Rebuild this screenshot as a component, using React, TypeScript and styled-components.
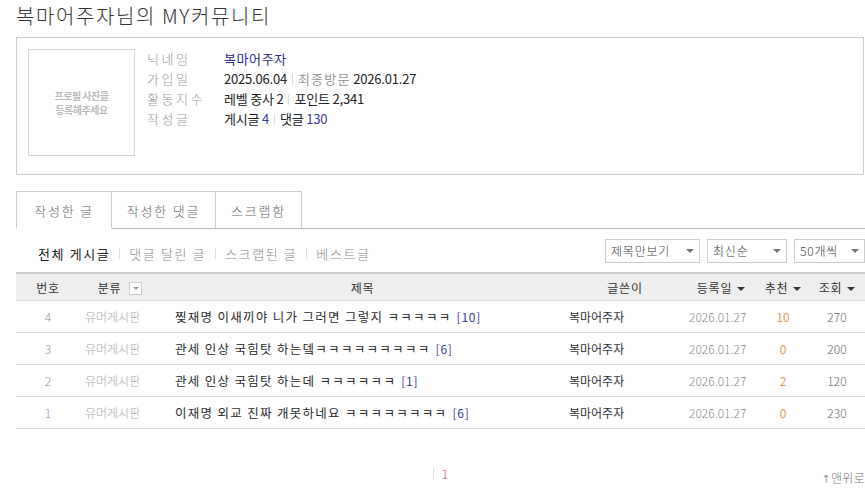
import styled, { createGlobalStyle } from 'styled-components'

const GlobalStyle = createGlobalStyle`
  html, body {
    margin: 0;
    padding: 0;
    background: #fff;
  }
  body {
    font-family: 'Noto Sans CJK KR', 'Noto Sans', sans-serif;
    font-size: 13px;
    color: #333;
  }
`

const Page = styled.div`
  width: 849px;
  padding: 0 0 0 16px;
  overflow: hidden;
`

const Title = styled.h1`
  margin: 0;
  padding-top: 1px;
  height: 36px;
  font-size: 20px;
  font-weight: 300;
  color: #333;
  letter-spacing: 1.6px;
`

const ProfileBox = styled.div`
  display: flex;
  gap: 12px;
  height: 114px;
  padding: 11px;
  border: 1px solid #ccc;
  width: 824px;
`

const PhotoBox = styled.div`
  width: 105px;
  height: 105px;
  border: 1px solid #d5d5d5;
  display: flex;
  align-items: center;
  justify-content: center;
  text-align: center;
  font-size: 10px;
  line-height: 14px;
  font-weight: bold;
  color: #bbb;
  letter-spacing: -0.5px;
`

const InfoList = styled.dl`
  margin: 0;
  display: grid;
  grid-template-columns: 77px auto;
  grid-auto-rows: 20px;
  align-content: start;
  font-size: 13px;
  line-height: 20px;
`

const Label = styled.dt`
  color: #999;
  letter-spacing: 2.5px;
  font-weight: 300;
`

const Value = styled.dd`
  margin: 0;
  color: #222;
  letter-spacing: -0.2px;
`

const Muted = styled.span`
  color: #999;
  letter-spacing: 1.2px;
`

const Nick = styled.span`
  color: #2c2c8c;
  letter-spacing: 0.6px;
`

const Num = styled.span`
  color: #3a3a9a;
`

const Bar = styled.span<{ $gap?: number }>`
  display: inline-block;
  width: 1px;
  height: 11px;
  background: #ddd;
  margin: 0 ${p => p.$gap ?? 5}px;
  vertical-align: -1px;
`

const Tabs = styled.div`
  display: flex;
  margin-top: 16px;
  border-bottom: 1px solid #bbb;
  height: 37px;
`

const Tab = styled.div<{ $active?: boolean; $w: number }>`
  width: ${p => p.$w}px;
  box-sizing: border-box;
  height: ${p => (p.$active ? '38px' : '37px')};
  border: 1px solid #ccc;
  border-left-width: ${p => (p.$active ? '1px' : '0')};
  border-bottom: ${p => (p.$active ? '1px solid #fff' : '0')};
  background: #fff;
  display: flex;
  align-items: center;
  justify-content: center;
  color: #666;
  font-size: 13px;
  font-weight: 300;
  letter-spacing: 1.8px;
`

const ToolRow = styled.div`
  display: flex;
  align-items: center;
  justify-content: space-between;
  height: 43px;
`

const SubNav = styled.div`
  display: flex;
  align-items: center;
  padding-left: 22px;
  padding-top: 5px;
  font-size: 13px;
  color: #888;
  letter-spacing: 1.6px;
`

const SubItem = styled.span<{ $on?: boolean }>`
  color: ${p => (p.$on ? '#222' : '#888')};
  font-weight: ${p => (p.$on ? 400 : 300)};
`

const Selects = styled.div`
  display: flex;
  gap: 7px;
`

const SelectBox = styled.div<{ $w: number }>`
  width: ${p => p.$w}px;
  height: 24px;
  box-sizing: border-box;
  border: 1px solid #ccc;
  display: flex;
  align-items: center;
  justify-content: space-between;
  padding: 0 5px;
  font-size: 12px;
  font-weight: 300;
  color: #444;
  letter-spacing: 0.8px;
`

const Caret = styled.span`
  width: 0;
  height: 0;
  border-left: 4px solid transparent;
  border-right: 4px solid transparent;
  border-top: 4px solid #777;
`

const Table = styled.table`
  width: 849px;
  border-collapse: collapse;
  table-layout: fixed;
`

const Th = styled.th`
  height: 26px;
  padding: 0;
  background: #eee;
  border-top: 2px solid #ccc;
  border-bottom: 1px solid #ddd;
  font-weight: normal;
  font-size: 12px;
  color: #333;
  text-align: center;
  letter-spacing: 0.8px;
`

const SortCaret = styled(Caret)`
  display: inline-block;
  margin-left: 5px;
  vertical-align: 2px;
  border-top-color: #333;
`

const FilterBtn = styled.span`
  display: inline-block;
  width: 11px;
  height: 11px;
  border: 1px solid #ccc;
  background: #fff;
  margin-left: 8px;
  vertical-align: -2px;
  position: relative;
  &::after {
    content: '';
    position: absolute;
    left: 3px;
    top: 4px;
    border-left: 3px solid transparent;
    border-right: 3px solid transparent;
    border-top: 3px solid #999;
  }
`

const Td = styled.td<{ $align?: string; $color?: string; $pad?: number; $bold?: boolean }>`
  height: 31px;
  padding: 0 0 0 ${p => p.$pad ?? 0}px;
  border-bottom: 1px solid #ddd;
  text-align: ${p => p.$align || 'left'};
  color: ${p => p.$color || '#333'};
  font-size: 12px;
  font-weight: ${p => (p.$bold ? 400 : 300)};
  white-space: nowrap;
  overflow: hidden;
`

const Subject = styled.span`
  font-size: 12.5px;
  font-weight: 400;
  color: #2a2a2a;
  letter-spacing: 1.3px;
`

const Count = styled.span`
  color: #3c3c9c;
  font-weight: 400;
  margin-left: 5px;
  letter-spacing: 0.8px;
`

const Footer = styled.div`
  position: relative;
  height: 72px;
  display: flex;
  justify-content: center;
  align-items: center;
  padding-top: 18px;
  box-sizing: border-box;
`

const PageNum = styled.span`
  color: #d0455a;
  font-size: 12px;
  font-weight: 300;
  padding-left: 8px;
  border-left: 1px solid #ddd;
  line-height: 12px;
`

const TopLink = styled.span`
  position: absolute;
  right: 0;
  top: 40px;
  font-size: 12px;
  font-weight: 300;
  color: #777;
  letter-spacing: 0.3px;
`

const Arrow = styled.span`
  font-family: 'DejaVu Sans', sans-serif;
  font-size: 11px;
  color: #666;
`

const rows = [
  { no: 4, title: '찢재명 이새끼야 니가 그러면 그렇지 ㅋㅋㅋㅋㅋ', cnt: 10, rec: 10, view: 270 },
  { no: 3, title: '관세 인상 국힘탓 하는뎈ㅋㅋㅋㅋㅋㅋㅋㅋㅋ', cnt: 6, rec: 0, view: 200 },
  { no: 2, title: '관세 인상 국힘탓 하는데 ㅋㅋㅋㅋㅋㅋ', cnt: 1, rec: 2, view: 120 },
  { no: 1, title: '이재명 외교 진짜 개못하네요 ㅋㅋㅋㅋㅋㅋㅋㅋ', cnt: 6, rec: 0, view: 230 },
]

export default function App() {
  return (
    <Page>
      <GlobalStyle />
      <Title>복마어주자님의 MY커뮤니티</Title>
      <ProfileBox>
        <PhotoBox>
          프로필 사진을
          <br />
          등록해주세요
        </PhotoBox>
        <InfoList>
          <Label>닉네임</Label>
          <Value>
            <Nick>복마어주자</Nick>
          </Value>
          <Label>가입일</Label>
          <Value>
            2025.06.04<Bar />
            <Muted>최종방문</Muted> 2026.01.27
          </Value>
          <Label>활동지수</Label>
          <Value>
            레벨 중사 2<Bar />
            포인트 2,341
          </Value>
          <Label>작성글</Label>
          <Value>
            게시글 <Num>4</Num>
            <Bar />
            댓글 <Num>130</Num>
          </Value>
        </InfoList>
      </ProfileBox>

      <Tabs>
        <Tab $active $w={96}>작성한 글</Tab>
        <Tab $w={104}>작성한 댓글</Tab>
        <Tab $w={86}>스크랩함</Tab>
      </Tabs>

      <ToolRow>
        <SubNav>
          <SubItem $on>전체 게시글</SubItem>
          <Bar $gap={9} />
          <SubItem>댓글 달린 글</SubItem>
          <Bar $gap={9} />
          <SubItem>스크랩된 글</SubItem>
          <Bar $gap={9} />
          <SubItem>베스트글</SubItem>
        </SubNav>
        <Selects>
          <SelectBox $w={95}>
            제목만보기 <Caret />
          </SelectBox>
          <SelectBox $w={80}>
            최신순 <Caret />
          </SelectBox>
          <SelectBox $w={71}>
            50개씩 <Caret />
          </SelectBox>
        </Selects>
      </ToolRow>

      <Table>
        <colgroup>
          <col style={{ width: 64 }} />
          <col style={{ width: 80 }} />
          <col style={{ width: 405 }} />
          <col style={{ width: 120 }} />
          <col style={{ width: 72 }} />
          <col style={{ width: 52 }} />
          <col style={{ width: 56 }} />
        </colgroup>
        <thead>
          <tr>
            <Th>번호</Th>
            <Th>
              분류
              <FilterBtn />
            </Th>
            <Th>제목</Th>
            <Th>글쓴이</Th>
            <Th>
              등록일
              <SortCaret />
            </Th>
            <Th>
              추천
              <SortCaret />
            </Th>
            <Th>
              조회
              <SortCaret />
            </Th>
          </tr>
        </thead>
        <tbody>
          {rows.map(r => (
            <tr key={r.no}>
              <Td $align="center" $color="#999">
                {r.no}
              </Td>
              <Td $color="#aaa" $pad={5}>
                유머게시판
              </Td>
              <Td $pad={15}>
                <Subject>{r.title}</Subject>
                <Count>[{r.cnt}]</Count>
              </Td>
              <Td $pad={4} $color="#333" $bold>
                복마어주자
              </Td>
              <Td $pad={4} $color="#888">
                2026.01.27
              </Td>
              <Td $align="center" $color="#e39a55" $bold>
                {r.rec}
              </Td>
              <Td $align="center" $color="#666">
                {r.view}
              </Td>
            </tr>
          ))}
        </tbody>
      </Table>

      <Footer>
        <PageNum>1</PageNum>
        <TopLink>
          <Arrow>↑</Arrow>맨위로
        </TopLink>
      </Footer>
    </Page>
  )
}
